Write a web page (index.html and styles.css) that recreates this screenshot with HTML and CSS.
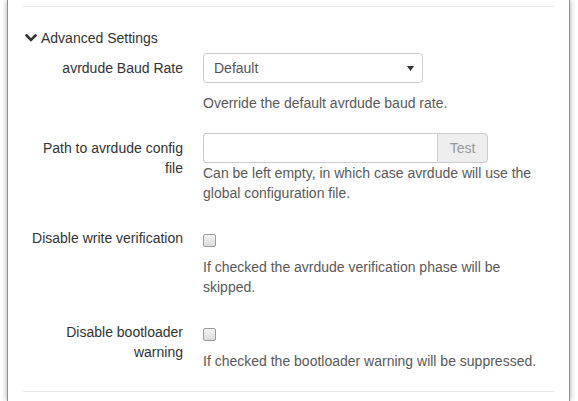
FILE: index.html
```html
<!DOCTYPE html>
<html>
<head>
<meta charset="utf-8">
<link rel="stylesheet" href="styles.css">
</head>
<body>
<div class="page">
  <div class="modal">
    <div class="modal-body">
      <div class="rule"></div>
      <a class="toggle" href="#">
        <svg class="chev" width="12" height="9" viewBox="0 0 12 9"><polyline points="1.5,1.5 6,6 10.5,1.5" fill="none" stroke="#333" stroke-width="2.6" stroke-linecap="square"/></svg>
        <span>Advanced Settings</span>
      </a>
      <div class="groups">
        <div class="group g-select">
          <label class="label">avrdude Baud Rate</label>
          <div class="controls">
            <div class="select">
              <span class="select-text">Default</span>
              <svg class="caret" width="7" height="5" viewBox="0 0 7 5"><polygon points="0,0 7,0 3.5,5" fill="#333"/></svg>
            </div>
            <span class="help help-sel">Override the default avrdude baud rate.</span>
          </div>
        </div>
        <div class="group">
          <label class="label">Path to avrdude config file</label>
          <div class="controls">
            <div class="append">
              <input class="text-input" type="text">
              <button class="btn" type="button">Test</button>
            </div>
            <span class="help">Can be left empty, in which case avrdude will use the global configuration file.</span>
          </div>
        </div>
        <div class="group">
          <label class="label">Disable write verification</label>
          <div class="controls">
            <input class="check" type="checkbox">
            <span class="help help-check">If checked the avrdude verification phase will be skipped.</span>
          </div>
        </div>
        <div class="group">
          <label class="label">Disable bootloader warning</label>
          <div class="controls">
            <input class="check" type="checkbox">
            <span class="help help-check">If checked the bootloader warning will be suppressed.</span>
          </div>
        </div>
      </div>
      <div class="rule"></div>
    </div>
  </div>
</div>
</body>
</html>
```

FILE: styles.css
```css
html, body {
  margin: 0;
  padding: 0;
  background: #fff;
  overflow: hidden;
}
body {
  font-family: "Liberation Sans", Arial, sans-serif;
  font-size: 14px;
  line-height: 20px;
  color: #333;
}
.page {
  box-sizing: border-box;
  padding: 0 8px 0 7px;
  height: 401px;
}
.modal {
  box-sizing: border-box;
  border-left: 1px solid #8f8f8f;
  border-right: 1px solid #8f8f8f;
  box-shadow: 0 0 6px rgba(0, 0, 0, 0.35);
  background: #fff;
  height: 100%;
}
.modal-body {
  padding: 6px 15px 0 15px;
  display: flex;
  flex-direction: column;
}
.rule {
  height: 1px;
  background: #e8e8e8;
}
.toggle {
  margin-top: 21px;
  display: flex;
  align-items: center;
  gap: 4px;
  color: #333;
  text-decoration: none;
  padding-left: 2px;
  height: 20px;
}
.chev {
  display: block;
  margin-top: 1px;
}
.groups {
  margin-top: 5px;
  display: flex;
  flex-direction: column;
  gap: 20px;
  margin-bottom: 20px;
}
.group {
  display: grid;
  grid-template-columns: 160px 1fr;
  column-gap: 20px;
}
.label {
  text-align: right;
  padding-top: 5px;
  color: #333;
}
.controls {
  display: flex;
  flex-direction: column;
  align-items: flex-start;
}
.select {
  box-sizing: border-box;
  width: 220px;
  height: 30px;
  border: 1px solid #ccc;
  border-radius: 4px;
  background: #fff;
  display: flex;
  align-items: center;
  justify-content: space-between;
  padding: 0 8px 0 10px;
  color: #555;
}
.caret {
  display: block;
}
.help {
  display: block;
  color: #595959;
}
.help-sel {
  margin-top: 10px;
}
.append {
  display: flex;
  height: 30px;
}
.text-input {
  box-sizing: border-box;
  width: 234px;
  height: 30px;
  margin: 0;
  border: 1px solid #ccc;
  border-right: none;
  border-radius: 4px 0 0 4px;
  background: #fff;
  padding: 4px 6px;
  font: inherit;
  outline: none;
}
.btn {
  box-sizing: border-box;
  width: 51px;
  height: 30px;
  margin: 0;
  border: 1px solid #ccc;
  border-radius: 0 4px 4px 0;
  background: #eeeeee;
  color: #999;
  font: inherit;
  padding: 0;
}
.check {
  -webkit-appearance: none;
  appearance: none;
  box-sizing: border-box;
  width: 13px;
  height: 13px;
  margin: 11px 0 0 0;
  border: 1px solid #9a9a9a;
  border-radius: 2px;
  background: linear-gradient(#f2f2f2, #dcdcdc);
}
.help-check {
  margin-top: 10px;
}
```
